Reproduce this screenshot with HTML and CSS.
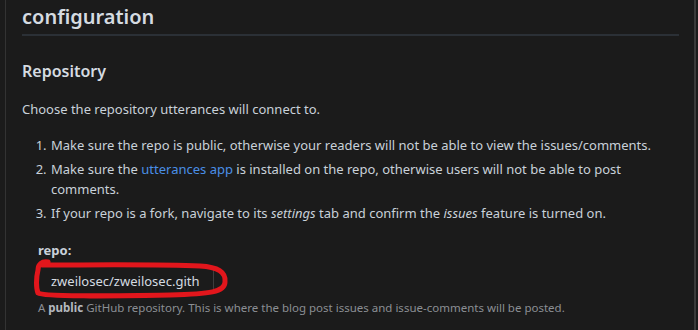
FILE: index.html
```html
<!DOCTYPE html>
<html lang="en">

<head>
    <meta charset="UTF-8">
    <meta name="viewport" content="width=device-width, initial-scale=1.0">
    <title>utterances configuration</title>
    <link rel="stylesheet" href="styles.css">
</head>

<body>
    <div class="page">
        <h1>configuration</h1>

        <h2>Repository</h2>
        <p>Choose the repository utterances will connect to.</p>

        <ol class="steps">
            <li>Make sure the repo is public, otherwise your readers will not be able to view the issues/comments.</li>
            <li>Make sure the <a href="#">utterances app</a> is installed on the repo, otherwise users will not be able to post comments.</li>
            <li>If your repo is a fork, navigate to its <em>settings</em> tab and confirm the <em>issues</em> feature is turned on.</li>
        </ol>

        <div class="field">
            <label for="repo">repo:</label>
            <div class="input-wrap">
                <input type="text" id="repo" value="zweilosec/zweilosec.gith">
                <svg class="scribble" viewBox="0 0 200 45" width="200" height="45">
                    <path d="M18 6 C12 5 8 8 8 14 C6 22 6 32 8 37 C14 41 80 40 140 39 C180 38 195 36 195 26 C196 16 188 11 170 10 C130 8 60 9 12 9"
                          fill="none" stroke="#e2161c" stroke-width="5" stroke-linecap="round" stroke-linejoin="round" />
                </svg>
            </div>
            <p class="note">A <strong>public</strong> GitHub repository. This is where the blog post issues and issue-comments will be posted.</p>
        </div>
    </div>
</body>

</html>
```

FILE: styles.css
```css
* {
    margin: 0;
    padding: 0;
    box-sizing: border-box;
}

body {
    background: #1b1b1b;
    color: #c9d1d9;
    font-family: 'Noto Sans', 'Open Sans', sans-serif;
    font-size: 13px;
    line-height: 20px;
}

.page {
    margin: 0 2px 0 5px;
    height: 330px;
    border-left: 1px solid #333;
    border-right: 2px solid #3a3a3a;
    padding: 0 15px 0 16px;
    overflow: hidden;
}

h1 {
    font-size: 20px;
    font-weight: 600;
    line-height: 30px;
    color: #d5dbe1;
    margin-top: 2px;
    padding-bottom: 2px;
    border-bottom: 2px solid #2b3036;
}

h2 {
    font-size: 16px;
    font-weight: 600;
    line-height: 24px;
    color: #d5dbe1;
    margin-top: 23px;
}

p {
    margin-top: 16px;
}

.steps {
    margin-top: 16px;
    padding-left: 28px;
}

.steps li {
    margin-bottom: 4px;
    padding-left: 1px;
}

a {
    color: #4a8fe7;
    text-decoration: none;
}

.field {
    margin-top: 18px;
    padding-left: 16px;
}

label {
    display: block;
    font-weight: 700;
    line-height: 18px;
}

.input-wrap {
    position: relative;
    width: 200px;
    margin-top: 10px;
}

input {
    width: 176px;
    height: 24px;
    background: #1b1b1b;
    color: #d5dbe1;
    border: none;
    border-right: 1px solid #3d3d3d;
    font-family: inherit;
    font-size: 13px;
    padding: 0 8px 0 13px;
    outline: none;
}

.scribble {
    position: absolute;
    left: -8px;
    top: -13px;
}

.note {
    margin-top: 7px;
    font-size: 11.5px;
    line-height: 16px;
    color: #8b8f94;
}

.note strong {
    color: #b4b9bf;
}
```
